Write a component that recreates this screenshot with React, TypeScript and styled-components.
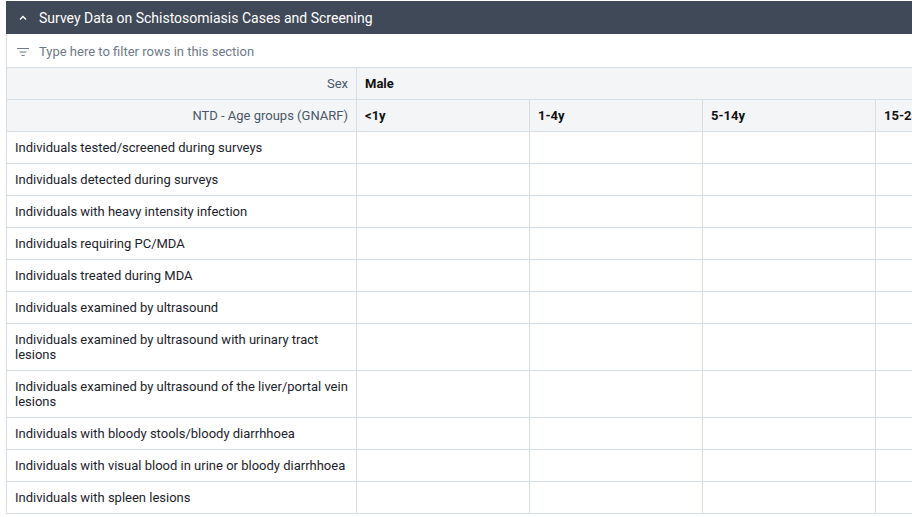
import React from "react";
import styled, { createGlobalStyle } from "styled-components";

const GlobalStyle = createGlobalStyle`
  body {
    margin: 0;
    background: #ffffff;
    font-family: Roboto, "Liberation Sans", Arial, sans-serif;
  }
`;

const Page = styled.div`
  width: 912px;
  height: 517px;
  padding: 1px 0 0 6px;
  box-sizing: border-box;
  overflow: hidden;
`;

const Section = styled.div`
  width: 1042px;
`;

const SectionHeader = styled.div`
  height: 33px;
  background: #3f4957;
  color: #ffffff;
  display: flex;
  align-items: center;
  gap: 10px;
  padding-left: 11px;
  font-size: 14px;
`;

const FilterRow = styled.div`
  height: 33px;
  box-sizing: border-box;
  padding: 2px 0 0 9px;
  display: flex;
  align-items: center;
  gap: 9px;
  border-left: 1px solid #d5dde5;
  color: #6e7a8a;
  font-size: 13px;
`;

const Table = styled.table`
  width: 1042px;
  border-collapse: collapse;
  table-layout: fixed;
  font-size: 13px;
  color: #1c232c;
`;

const Cell = styled.td<{ $head?: boolean; $right?: boolean; $bold?: boolean }>`
  border: 1px solid #d5dde5;
  padding: 8px 8px;
  line-height: 15px;
  vertical-align: middle;
  background: ${(p) => (p.$head ? "#f3f5f7" : "#ffffff")};
  text-align: ${(p) => (p.$right ? "right" : "left")};
  font-weight: ${(p) => (p.$bold ? 700 : 400)};
  color: ${(p) => (p.$right ? "#4a5768" : p.$bold ? "#111111" : "#1c232c")};
`;

const ChevronUp = () => (
  <svg width="12" height="12" viewBox="0 0 12 12" fill="none">
    <path d="M3 7.5 L6 4.5 L9 7.5" stroke="#ffffff" strokeWidth="1.3" />
  </svg>
);

const FilterIcon = () => (
  <svg width="14" height="14" viewBox="0 0 14 14" fill="none">
    <path d="M1 3.5 H13 M3.5 7 H10.5 M5.5 10.5 H8.5" stroke="#6e7a8a" strokeWidth="1.2" />
  </svg>
);

const ages = ["<1y", "1-4y", "5-14y", "15-24y"];

const rows = [
  "Individuals tested/screened during surveys",
  "Individuals detected during surveys",
  "Individuals with heavy intensity infection",
  "Individuals requiring PC/MDA",
  "Individuals treated during MDA",
  "Individuals examined by ultrasound",
  "Individuals examined by ultrasound with urinary tract lesions",
  "Individuals examined by ultrasound of the liver/portal vein lesions",
  "Individuals with bloody stools/bloody diarrhhoea",
  "Individuals with visual blood in urine or bloody diarrhhoea",
  "Individuals with spleen lesions",
];

export default function App() {
  return (
    <Page>
      <GlobalStyle />
      <Section>
        <SectionHeader>
          <ChevronUp />
          Survey Data on Schistosomiasis Cases and Screening
        </SectionHeader>
        <FilterRow>
          <FilterIcon />
          Type here to filter rows in this section
        </FilterRow>
        <Table>
          <colgroup>
            <col style={{ width: 350 }} />
            {ages.map((a) => (
              <col key={a} style={{ width: 173 }} />
            ))}
          </colgroup>
          <thead>
            <tr>
              <Cell as="th" $head $right>
                Sex
              </Cell>
              <Cell as="th" $head $bold colSpan={4}>
                Male
              </Cell>
            </tr>
            <tr>
              <Cell as="th" $head $right>
                NTD - Age groups (GNARF)
              </Cell>
              {ages.map((a) => (
                <Cell as="th" key={a} $head $bold>
                  {a}
                </Cell>
              ))}
            </tr>
          </thead>
          <tbody>
            {rows.map((r) => (
              <tr key={r}>
                <Cell>{r}</Cell>
                {ages.map((a) => (
                  <Cell key={a} />
                ))}
              </tr>
            ))}
          </tbody>
        </Table>
      </Section>
    </Page>
  );
}
